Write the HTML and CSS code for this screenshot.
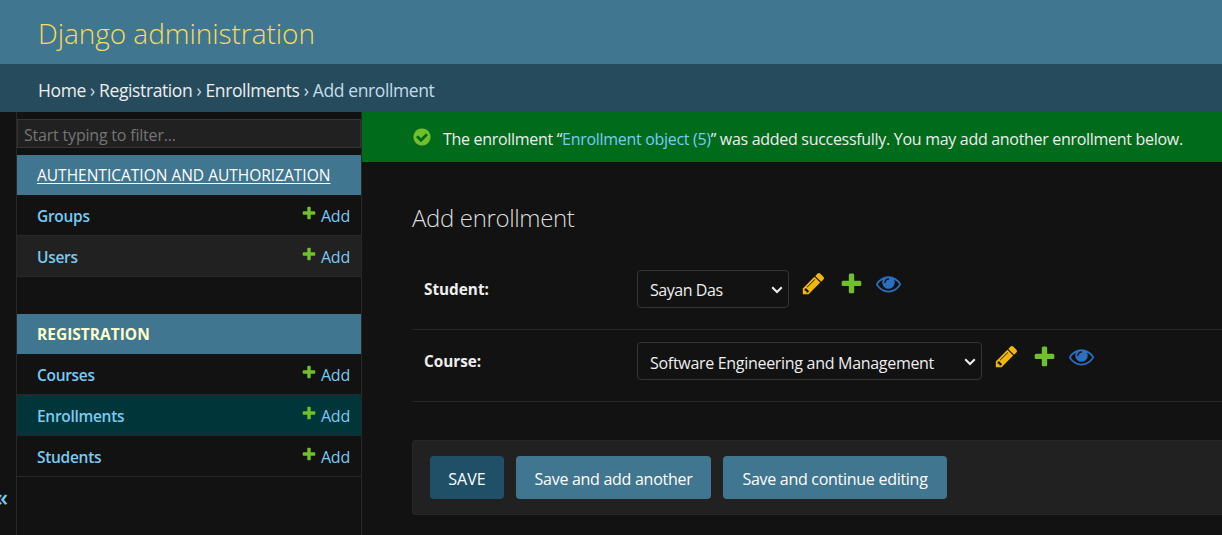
FILE: index.html
```html
<!DOCTYPE html>
<html lang="en">
<head>
<meta charset="utf-8">
<title>Add enrollment | Django administration</title>
<link rel="stylesheet" href="styles.css">
</head>
<body>
<svg class="defs" width="0" height="0" aria-hidden="true">
  <symbol id="plus" viewBox="0 0 1792 1792"><path d="M1600 796v192q0 40-28 68t-68 28h-416v416q0 40-28 68t-68 28h-192q-40 0-68-28t-28-68v-416h-416q-40 0-68-28t-28-68v-192q0-40 28-68t68-28h416v-416q0-40 28-68t68-28h192q40 0 68 28t28 68v416h416q40 0 68 28t28 68z"/></symbol>
  <symbol id="pencil" viewBox="0 0 1792 1792"><path d="M491 1536l91-91-235-235-91 91v107h128v128h107zm523-928q0-22-22-22-10 0-17 7l-542 542q-7 7-7 17 0 22 22 22 10 0 17-7l542-542q7-7 7-17zm-54-192l416 416-832 832h-416v-416zm683 96q0 53-37 90l-166 166-416-416 166-165q36-38 90-38 53 0 91 38l235 234q37 39 37 91z"/></symbol>
  <symbol id="eye" viewBox="0 0 1792 1792"><path d="M1664 960q-152-236-381-353 61 104 61 225 0 185-131.5 316.5t-316.5 131.5-316.5-131.5-131.5-316.5q0-121 61-225-229 117-381 353 133 205 333.5 326.5t434.5 121.5 434.5-121.5 333.5-326.5zm-720-384q0-20-14-34t-34-14q-125 0-214.5 89.5t-89.5 214.5q0 20 14 34t34 14 34-14 14-34q0-86 61-147t147-61q20 0 34-14t14-34zm848 384q0 34-20 69-140 230-376.5 368.5t-499.5 138.5-499.5-139-376.5-368q-20-35-20-69t20-69q140-229 376.5-368t499.5-139 499.5 139 376.5 368q20 35 20 69z"/></symbol>
  <symbol id="yes" viewBox="0 0 1792 1792"><path d="M1412 734q0-28-18-46l-91-90q-19-19-45-19t-45 19l-408 407-226-226q-19-19-45-19t-45 19l-91 90q-18 18-18 46 0 27 18 45l362 362q19 19 45 19 27 0 46-19l543-543q18-18 18-45zm252 162q0 209-103 385.5t-279.5 279.5-385.5 103-385.5-103-279.5-279.5-103-385.5 103-385.5 279.5-279.5 385.5-103 385.5 103 279.5 279.5 103 385.5z"/></symbol>
  <symbol id="chevron" viewBox="0 0 12 8"><path d="M1.2 1.2L6 6L10.8 1.2" fill="none" stroke="#eee" stroke-width="2"/></symbol>
</svg>
<header class="header"><span class="brand">Django administration</span></header>
<nav class="breadcrumbs"><span class="crumbs"><a>Home</a> › <a>Registration</a> › <a>Enrollments</a> › Add enrollment</span></nav>
<div class="main">
  <button class="toggle">«</button>
  <nav class="sidebar">
    <input class="filter" type="search" placeholder="Start typing to filter...">
    <section class="app">
      <h2 class="caption linked"><span>AUTHENTICATION AND AUTHORIZATION</span></h2>
      <div class="model"><a class="name">Groups</a><a class="add"><svg class="add-icon"><use href="#plus"/></svg><span>Add</span></a></div>
      <div class="model alt"><a class="name">Users</a><a class="add"><svg class="add-icon"><use href="#plus"/></svg><span>Add</span></a></div>
    </section>
    <section class="app">
      <h2 class="caption current"><span>REGISTRATION</span></h2>
      <div class="model"><a class="name">Courses</a><a class="add"><svg class="add-icon"><use href="#plus"/></svg><span>Add</span></a></div>
      <div class="model selected"><a class="name">Enrollments</a><a class="add"><svg class="add-icon"><use href="#plus"/></svg><span>Add</span></a></div>
      <div class="model"><a class="name">Students</a><a class="add"><svg class="add-icon"><use href="#plus"/></svg><span>Add</span></a></div>
    </section>
  </nav>
  <main class="content">
    <div class="message"><svg class="yes-icon"><use href="#yes"/></svg><span class="message-text">The enrollment “<a>Enrollment object (5)</a>” was added successfully. You may add another enrollment below.</span></div>
    <div class="body">
      <h1 class="title">Add enrollment</h1>
      <div class="form-row first">
        <label class="label">Student:</label>
        <div class="picker student"><select class="select"><option>Sayan Das</option></select><svg class="chevron"><use href="#chevron"/></svg></div>
        <div class="tools"><svg class="tool pencil"><use href="#pencil"/></svg><svg class="tool plus"><use href="#plus"/></svg><svg class="tool eye"><use href="#eye"/></svg></div>
      </div>
      <div class="form-row">
        <label class="label">Course:</label>
        <div class="picker course"><select class="select"><option>Software Engineering and Management</option></select><svg class="chevron"><use href="#chevron"/></svg></div>
        <div class="tools"><svg class="tool pencil"><use href="#pencil"/></svg><svg class="tool plus"><use href="#plus"/></svg><svg class="tool eye"><use href="#eye"/></svg></div>
      </div>
      <div class="submit-row">
        <button class="button save">SAVE</button>
        <button class="button another">Save and add another</button>
        <button class="button continue">Save and continue editing</button>
      </div>
    </div>
  </main>
</div>
</body>
</html>
```

FILE: styles.css
```css
* { box-sizing: border-box; }
html { color-scheme: dark; }
body {
  margin: 0; height: 535px; overflow: hidden;
  display: flex; flex-direction: column;
  background: #121212; color: #eee;
  font: 16px/20px "Open Sans", "Noto Sans", sans-serif;
  white-space: nowrap;
}
.defs { position: absolute; }
button, input, select { font: inherit; margin: 0; }
.header { height: 64px; background: #417690; padding: 2px 38px 0; display: flex; align-items: center; flex: none; }
.brand { color: #f5dd5d; font-size: 28px; font-weight: 300; line-height: 36px; letter-spacing: -0.05px; }
.breadcrumbs { height: 48px; background: #264b5d; color: #c4dce8; padding: 3px 38px 0; display: flex; align-items: center; flex: none; font-size: 17.5px; }
.crumbs { letter-spacing: -0.39px; }
.breadcrumbs a { color: #eee; }
.main { display: flex; flex: 1; min-height: 0; }
.toggle { width: 16px; border: 0; padding: 0 8px 28px 0; background: #121212; color: #79caf2; font-size: 24px; font-weight: 600; display: flex; align-items: flex-end; justify-content: flex-end; overflow: hidden; }
.sidebar { width: 346px; border: solid #282828; border-width: 0 1px; padding-top: 7px; }
.filter { display: block; width: 344px; height: 29px; padding: 3px 6px 0; border: 1px solid #353535; border-radius: 0; background: #212121; color: #eee; appearance: none; outline: 0; letter-spacing: -0.2px; }
.filter::placeholder { color: #757575; }
.app { margin: 7px 0 37px; }
.caption { margin: 0; height: 40px; padding: 0 20px; display: flex; align-items: center; background: #417690; font-size: 15.5px; font-weight: 400; color: #fff; }
.linked span { text-decoration: underline; text-underline-offset: 2px; }
.current { color: #ffc; font-weight: 700; }
.model { height: 41px; padding: 2px 11px 0 20px; border-bottom: 1px solid #282828; display: flex; align-items: center; justify-content: space-between; color: #79caf2; }
.alt { background: #212121; }
.selected { background: #003539; }
.name { font-weight: 600; font-size: 15.5px; letter-spacing: -0.3px; }
.add { display: flex; align-items: center; gap: 4px; letter-spacing: -0.2px; }
.add-icon { width: 16px; height: 16px; fill: #70bf2b; margin-top: -7px; }
.content { flex: 1; min-width: 0; }
.message { height: 50px; background: #006b1b; padding: 3px 0 0 50px; display: flex; align-items: center; color: #eee; }
.message-text { letter-spacing: -0.3px; }
.yes-icon { width: 20px; height: 20px; fill: #70bf2b; margin: -3px 11px 0 0; }
.message a { color: #79caf2; }
.body { padding-left: 50px; }
.title { margin: 38px 0 24px; font-size: 24px; line-height: 36px; font-weight: 300; color: #ddd; letter-spacing: -0.35px; }
.form-row { height: 72px; padding: 12px 0 0 12px; border-bottom: 1px solid #282828; display: flex; align-items: flex-start; }
.first { height: 70px; padding-top: 10px; }
.label { width: 213px; padding-top: 9px; font-size: 15.3px; font-weight: 700; }
.picker { display: grid; align-items: center; }
.picker > * { grid-area: 1 / 1; }
.select { width: 100%; height: 38px; padding: 3px 5px 0 12px; border: 1px solid #353535; border-radius: 4px; background: transparent; color: #eee; appearance: none; letter-spacing: -0.3px; }
.first .select { padding-top: 2px; letter-spacing: -0.45px; }
.chevron { width: 12px; height: 8px; justify-self: end; margin: 1px 6px 0 0; pointer-events: none; }
.student { width: 152px; }
.course { width: 345px; }
.tools { display: flex; padding: 2px 0 0 12px; gap: 13px; }
.first .tools { padding-top: 1px; }
.tool { width: 25px; height: 25px; }
.pencil { fill: #efb80b; }
.plus { fill: #70bf2b; }
.eye { fill: #2b70bf; margin-left: -1px; }
.submit-row { margin-top: 38px; height: 75px; border: 1px solid #282828; border-right: 0; border-radius: 4px 0 0 4px; background: #212121; padding: 15px 17px; display: flex; gap: 12px; }
.button { height: 43px; padding: 2px 0 0; border: 0; border-radius: 4px; background: #417690; color: #fff; letter-spacing: -0.28px; }
.save { width: 74px; background: #205067; letter-spacing: 0; }
.another { width: 195px; }
.continue { width: 224px; }
```
